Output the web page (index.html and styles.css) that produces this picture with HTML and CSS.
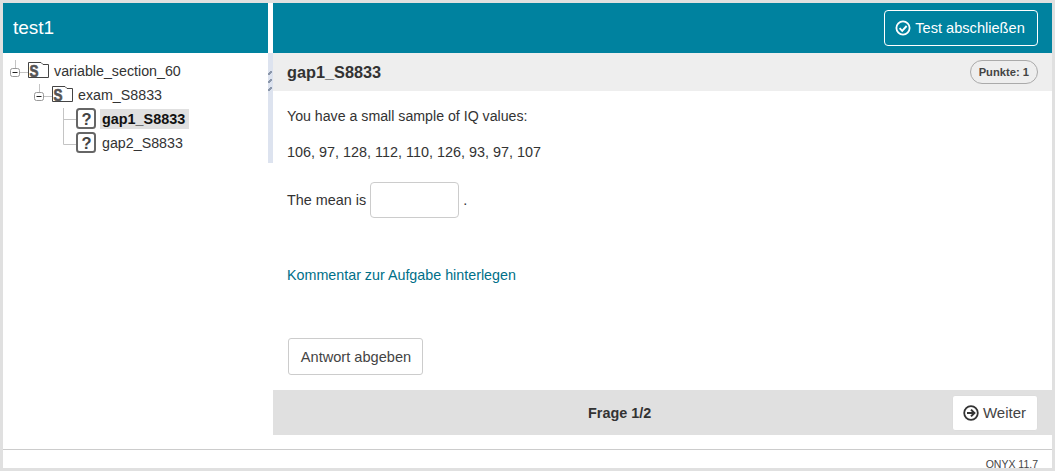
FILE: index.html
```html
<!DOCTYPE html>
<html lang="de">
<head>
<meta charset="utf-8">
<title>test1</title>
<link rel="stylesheet" href="styles.css">
</head>
<body>
<div class="app">
  <div class="workspace">
    <aside class="sidebar">
      <header class="sidebar-head">test1</header>
      <ul class="tree">
        <li class="tree-row level-0">
          <svg class="conn" width="20" height="24" viewBox="0 0 20 24"><path class="line" d="M7.500 1V9M12 13.500H20"/><rect class="exp" x="2.500" y="9.500" width="9" height="8" rx="2"/><path class="dash" d="M4.500 13.500H9.500"/></svg>
          <svg class="ico" width="21" height="24" viewBox="0 0 21 24"><path class="folder" d="M.5 18.500V3.500H13L15 5.500H20.500V18.500Z"/><text class="ico-s" x="6" y="17.500" textLength="9" lengthAdjust="spacingAndGlyphs">S</text></svg>
          <span class="label">variable_section_60</span>
        </li>
        <li class="tree-row level-1">
          <svg class="conn" width="20" height="24" viewBox="0 0 20 24"><path class="line" d="M7.500 1V9M12 13.500H20"/><rect class="exp" x="2.500" y="9.500" width="9" height="8" rx="2"/><path class="dash" d="M4.500 13.500H9.500"/></svg>
          <svg class="ico" width="21" height="24" viewBox="0 0 21 24"><path class="folder" d="M.5 18.500V3.500H13L15 5.500H20.500V18.500Z"/><text class="ico-s" x="6" y="17.500" textLength="9" lengthAdjust="spacingAndGlyphs">S</text></svg>
          <span class="label">exam_S8833</span>
        </li>
        <li class="tree-row level-2">
          <svg class="conn" width="20" height="24" viewBox="0 0 20 24"><path class="line" d="M7.500 1V24M7.500 12.500H20"/></svg>
          <svg class="ico" width="21" height="24" viewBox="0 0 21 24"><rect class="qbox" x="1" y="2" width="18" height="19" rx="2.500"/><text class="ico-q" x="10.500" y="17.500">?</text></svg>
          <span class="label current">gap1_S8833</span>
        </li>
        <li class="tree-row level-2">
          <svg class="conn" width="20" height="24" viewBox="0 0 20 24"><path class="line" d="M7.500 0V13.500H20"/></svg>
          <svg class="ico" width="21" height="24" viewBox="0 0 21 24"><rect class="qbox" x="1" y="2" width="18" height="19" rx="2.500"/><text class="ico-q" x="10.500" y="17.500">?</text></svg>
          <span class="label">gap2_S8833</span>
        </li>
      </ul>
    </aside>
    <div class="splitter">
      <span class="grip"></span><span class="grip"></span><span class="grip"></span>
    </div>
    <main class="content">
      <div class="topbar">
        <button class="btn-finish" type="button">
          <svg width="16" height="16" viewBox="0 0 16 16"><circle cx="8" cy="8" r="6.600" fill="none" stroke="#fff" stroke-width="1.800"/><path d="M4.600 8.200L7.200 10.800L11.600 6" fill="none" stroke="#fff" stroke-width="1.900"/></svg>
          Test abschließen
        </button>
      </div>
      <div class="item-head">
        <h1 class="item-title">gap1_S8833</h1>
        <span class="points">Punkte: 1</span>
      </div>
      <div class="item-body">
        <p class="para-first">You have a small sample of IQ values:</p>
        <p class="para-second">106, 97, 128, 112, 110, 126, 93, 97, 107</p>
        <div class="gap-line">
          <span>The mean is</span>
          <input class="gap-input" type="text" aria-label="mean">
          <span class="dot">.</span>
        </div>
        <a class="comment" href="#">Kommentar zur Aufgabe hinterlegen</a>
        <button class="btn-submit" type="button">Antwort abgeben</button>
      </div>
      <div class="navbar">
        <span class="counter">Frage 1/2</span>
        <button class="btn-next" type="button">
          <svg width="16" height="16" viewBox="0 0 16 16"><circle cx="8" cy="8" r="6.800" fill="none" stroke="#333" stroke-width="1.800"/><path d="M4 8H11M8 4.600L11.400 8L8 11.400" fill="none" stroke="#333" stroke-width="2"/></svg>
          Weiter
        </button>
      </div>
    </main>
  </div>
  <footer class="footer">ONYX 11.7</footer>
</div>
</body>
</html>
```
FILE: styles.css
```css
* { box-sizing: border-box; }
html, body { margin: 0; height: 100%; }
body {
  background: #e0e0e0;
  padding: 3px;
  font-family: "Liberation Sans", Arial, sans-serif;
  font-size: 14.400px;
  color: #333;
  overflow: hidden;
}
.app {
  background: #fff;
  height: 465px;
  display: flex;
  flex-direction: column;
}
.workspace { display: flex; height: 446px; }
.sidebar { width: 265px; flex: none; }
.sidebar-head {
  height: 50px;
  background: #00829f;
  color: #fff;
  font-size: 19px;
  line-height: 50px;
  padding-left: 10px;
}
.tree { list-style: none; margin: 0; padding: 6px 0 0; font-size: 14.250px; }
.tree-row { display: flex; align-items: center; height: 24px; color: #333; }
.level-0 { padding-left: 5px; }
.level-1 { padding-left: 29px; }
.level-2 { padding-left: 53px; }
.conn, .ico { flex: none; display: block; }
.line { fill: none; stroke: #c4c4c4; stroke-width: 1; }
.exp { fill: #fff; stroke: #999; stroke-width: 1; }
.dash { fill: none; stroke: #222; stroke-width: 1; }
.folder { fill: #fff; stroke: #444; stroke-width: 1; }
.ico-s, .ico-q {
  font-family: "Liberation Sans", Arial, sans-serif;
  font-weight: 700;
  fill: #555;
  text-anchor: middle;
}
.ico-s { font-size: 16px; stroke: #555; stroke-width: 0.700; }
.ico-q { font-size: 16.500px; fill: #444; }
.qbox { fill: #fff; stroke: #666; stroke-width: 2; }
.label { margin-left: 5px; padding: 0 2px 0 0; line-height: 20px; white-space: nowrap; }
.level-2 .label { margin-left: 3px; padding: 0 4px 0 2px; }
.label.current { background: #e0e0e0; font-weight: 700; font-size: 14.400px; color: #111; }
.splitter {
  width: 5px;
  flex: none;
  margin-top: 50px;
  height: 110px;
  background: #dde3ef;
  padding-top: 18px;
  display: flex;
  flex-direction: column;
  gap: 4px;
}
.grip { display: block; width: 4px; height: 4px; background: linear-gradient(135deg, #dde3ef 35%, #8b97ab 35%, #8b97ab 65%, #dde3ef 65%); }
.content { flex: 1; min-width: 0; display: flex; flex-direction: column; padding-bottom: 14px; }
.topbar {
  height: 50px;
  background: #00829f;
  display: flex;
  justify-content: flex-end;
  align-items: center;
  padding-right: 14px;
}
.btn-finish {
  height: 36px;
  width: 154px;
  background: transparent;
  border: 1px solid #fff;
  border-radius: 4px;
  color: #fff;
  font: inherit;
  font-size: 14.600px;
  display: flex;
  align-items: center;
  justify-content: center;
  gap: 4px;
  padding: 0 2px 0 0;
}
.item-head {
  height: 38px;
  background: #eee;
  display: flex;
  align-items: center;
  justify-content: space-between;
  padding: 0 14px;
}
.item-title { margin: 0; font-size: 16.300px; font-weight: 700; color: #333; }
.points {
  font-size: 11.200px;
  font-weight: 700;
  color: #444;
  height: 24px;
  line-height: 22px;
  border: 1px solid #aaa;
  border-radius: 12px;
  padding: 0 8px;
  background: #eee;
}
.item-body { flex: 1; padding: 0 14px; display: flex; flex-direction: column; align-items: flex-start; }
.para-first { margin: 15px 0 0; line-height: 20px; font-size: 14.180px; }
.para-second { margin: 16px 0 0; line-height: 20px; }
.gap-line { margin-top: 20px; display: flex; align-items: center; height: 36px; }
.gap-input {
  width: 89px;
  height: 36px;
  margin-left: 4px;
  border: 1px solid #ccc;
  border-radius: 4px;
  background: #fff;
}
.dot { margin-left: 4px; }
.comment { margin-top: 47px; line-height: 20px; color: #006f88; text-decoration: none; font-size: 14.300px; }
.btn-submit {
  margin: 53px 0 0 1px;
  width: 135px;
  height: 37px;
  background: #fff;
  border: 1px solid #ccc;
  border-radius: 3px;
  font: inherit;
  color: #444;
  font-size: 14.600px;
  padding: 0 0 0 1px;
}
.navbar {
  height: 45px;
  flex: none;
  background: #e0e0e0;
  display: flex;
  align-items: center;
  justify-content: space-between;
  padding-left: 315px;
  padding-right: 14px;
}
.counter { font-weight: 700; color: #333; }
.btn-next {
  width: 86px;
  height: 36px;
  background: #fff;
  border: 1px solid #ddd;
  border-radius: 3px;
  font: inherit;
  color: #444;
  font-size: 15px;
  display: flex;
  align-items: center;
  justify-content: center;
  gap: 4px;
  padding: 0 1px 0 0;
}
.footer {
  flex: none;
  height: 19px;
  border-top: 1px solid #ccc;
  font-size: 10.500px;
  color: #444;
  text-align: right;
  padding: 10px 14px 0 0;
  line-height: 8px;
}
```
